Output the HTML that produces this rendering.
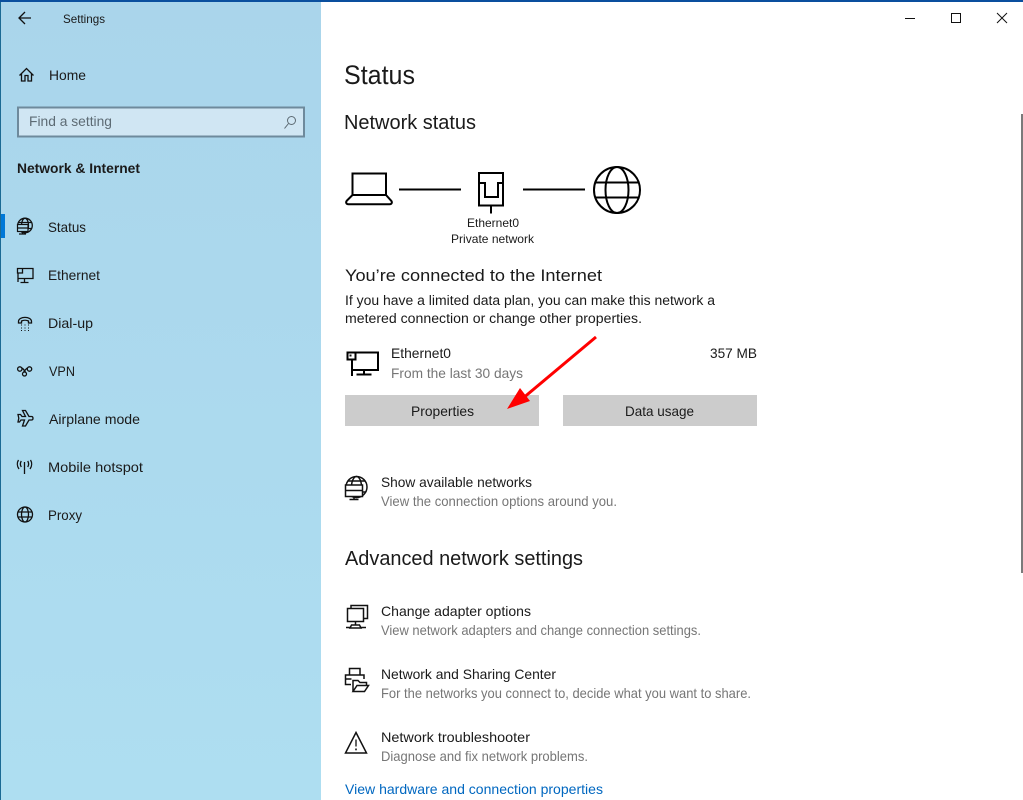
<!DOCTYPE html>
<html lang="en">
<head>
<meta charset="utf-8">
<title>Settings</title>
<style>
html,body{margin:0;padding:0;background:#fff;width:1023px;height:800px;overflow:hidden}
svg{display:block}
text{font-family:"Liberation Sans",sans-serif;fill:#1a1a1a;font-size:14px}
.g{fill:#767676}
.i{fill:none;stroke:#111;stroke-width:1.3}
.b{fill:none;stroke:#000;stroke-width:2}
</style>
</head>
<body>
<svg width="1023" height="800" viewBox="0 0 1023 800" xmlns="http://www.w3.org/2000/svg">
<defs>
<linearGradient id="sb" x1="0" y1="0" x2="0" y2="1">
<stop offset="0" stop-color="#aad5eb"/><stop offset=".35" stop-color="#abd8ed"/><stop offset="1" stop-color="#aedef1"/>
</linearGradient>
</defs>
<rect width="1023" height="800" fill="#fff"/>
<rect x="0" y="0" width="321" height="800" fill="url(#sb)"/>
<rect x="0" y="0" width="1" height="800" fill="#1b6a94"/>
<rect x="0" y="0" width="1023" height="2" fill="#0a4f9e"/>
<rect x="1021" y="114" width="2" height="459" fill="#7a7a7a"/>

<!-- title bar -->
<path class="i" d="M31 18H19.500M25 12l-6 6 6 6"/>
<text x="63" y="23" style="font-size:12px" textLength="42" lengthAdjust="spacingAndGlyphs">Settings</text>
<path d="M905 18.500h10" stroke="#111" stroke-width="1"/>
<rect x="951.500" y="13.500" width="9" height="9" fill="none" stroke="#111" stroke-width="1"/>
<path d="M997 13l10 10M1007 13l-10 10" stroke="#111" stroke-width="1" fill="none"/>

<!-- sidebar -->
<path class="i" d="M19.500 75.500l7-7 7 7M21.500 73.500v7.500h3.500V75.500h3v5.500h3.500V73.500"/>
<text x="49" y="80" textLength="37" lengthAdjust="spacingAndGlyphs">Home</text>
<rect x="18" y="107.500" width="286" height="29" fill="#d0e6f3" stroke="#6e8a9c" stroke-width="2"/>
<text class="g" x="29" y="126" style="fill:#5d6b74" textLength="83" lengthAdjust="spacingAndGlyphs">Find a setting</text>
<circle cx="291.500" cy="120.500" r="4" fill="none" stroke="#5d6b74" stroke-width="1"/>
<path d="M288.500 123.500l-4 5" stroke="#5d6b74" stroke-width="1"/>
<text x="17" y="173" style="font-weight:bold;font-size:13.500px" textLength="123" lengthAdjust="spacingAndGlyphs">Network &amp; Internet</text>

<rect x="1" y="214" width="4" height="24" fill="#0078d7"/>
<!-- status -->
<circle class="i" cx="25" cy="225.500" r="7.300"/>
<ellipse class="i" cx="25" cy="225.500" rx="3.500" ry="7.300"/>
<path class="i" d="M18.500 222.500h13M28 228.500h4"/>
<rect x="17.500" y="224.500" width="10.500" height="7" fill="#abd8ed" stroke="#111" stroke-width="1.200"/>
<path class="i" d="M17.500 228h10.500M22.500 231.500v2.500M19 234h7"/>
<text x="48" y="232" textLength="38" lengthAdjust="spacingAndGlyphs">Status</text>
<!-- ethernet -->
<path class="i" d="M22.500 268.500h10.500v10h-15M17.500 268.500h5v4.500h-5zM18 273v9M24.500 278.500v3.500M20.500 282.500h8"/>
<text x="48" y="280" textLength="52" lengthAdjust="spacingAndGlyphs">Ethernet</text>
<!-- dial-up -->
<path class="i" d="M18.500 321.500c0-5.500 13-5.500 13 0v1.500h-3v-2c-2-1-5-1-7 0v2h-3z"/>
<path d="M21 325h1M24.500 325h1M28 325h1M21 328h1M24.500 328h1M28 328h1M21 330.500h1M24.500 330.500h1M28 330.500h1" stroke="#111" stroke-width="1"/>
<text x="48" y="328" textLength="45" lengthAdjust="spacingAndGlyphs">Dial-up</text>
<!-- vpn -->
<circle class="i" cx="19.800" cy="369" r="2.200"/>
<circle class="i" cx="29.500" cy="369" r="2.200"/>
<circle class="i" cx="24.500" cy="374" r="2"/>
<path class="i" d="M21.800 368c1.500 .5 2.500 2.500 3.800 4.300M27.500 368c-1.500 .5-2.500 2.500-4 4.300"/>
<text x="49" y="376" textLength="26" lengthAdjust="spacingAndGlyphs">VPN</text>
<!-- airplane -->
<path class="i" d="M22.500 410.500h3l3.500 6h2.500c2 0 2 3.500 0 3.500H29l-3.500 6h-3l2-6h-3.500l-1.500 2H18l.8-3.800-.8-3.700h2.500l1.500 2h3.500z"/>
<text x="49" y="424" textLength="91" lengthAdjust="spacingAndGlyphs">Airplane mode</text>
<!-- hotspot -->
<path class="i" d="M24.500 462v12M21.300 461c-1.200 1.800-1.200 4 0 6M27.700 461c1.200 1.800 1.200 4 0 6M18.500 460c-1.600 2.500-1.600 6 .5 9M30.500 460c1.600 2.500 1.600 6-.5 9"/>
<text x="48" y="472" textLength="95" lengthAdjust="spacingAndGlyphs">Mobile hotspot</text>
<!-- proxy -->
<circle class="i" cx="25" cy="514.500" r="7.500"/>
<ellipse class="i" cx="25" cy="514.500" rx="3.500" ry="7.500"/>
<path class="i" d="M18 512h14M18 517h14"/>
<text x="48" y="520" textLength="34" lengthAdjust="spacingAndGlyphs">Proxy</text>

<!-- main headers -->
<text x="344" y="84" style="font-size:27px" textLength="71" lengthAdjust="spacingAndGlyphs">Status</text>
<text x="344" y="129" style="font-size:20px" textLength="132" lengthAdjust="spacingAndGlyphs">Network status</text>

<!-- network diagram -->
<path class="b" d="M352.500 195v-21.500h33.500V195M352.500 195l-5.500 5.500c-1.500 1.500-1 3.800 1.500 3.800h41c2.500 0 3-2.300 1.500-3.800L386 195zM352.500 195h33.500"/>
<path class="b" d="M399 189.500h62M523 189.500h62"/>
<path class="b" d="M479 173h24v32.500h-24zM479 183h6v14h13v-14h5"/>
<path class="b" d="M491 205.500v8"/>
<circle class="b" cx="617" cy="190" r="23"/>
<ellipse class="b" cx="617" cy="190" rx="11.500" ry="23"/>
<path class="b" d="M596 182.500h42M596 197.500h42"/>
<text x="467" y="227" style="font-size:12px" textLength="52" lengthAdjust="spacingAndGlyphs">Ethernet0</text>
<text x="451" y="243" style="font-size:12px" textLength="83" lengthAdjust="spacingAndGlyphs">Private network</text>

<text x="345" y="281" style="font-size:17px" textLength="257" lengthAdjust="spacingAndGlyphs">You’re connected to the Internet</text>
<text x="345" y="305" style="font-size:13.500px" textLength="370" lengthAdjust="spacingAndGlyphs">If you have a limited data plan, you can make this network a</text>
<text x="345" y="323" style="font-size:13.500px" textLength="297" lengthAdjust="spacingAndGlyphs">metered connection or change other properties.</text>

<!-- ethernet row -->
<path class="b" d="M355 352.500h23v17.500h-26M347.500 352.500h8v7h-8zM352 359.500V376M364 370v4.500M356.500 374.500h15"/>
<rect x="349.500" y="354.500" width="2" height="2" fill="#111"/>
<text x="391" y="358" textLength="60" lengthAdjust="spacingAndGlyphs">Ethernet0</text>
<text x="710" y="358" textLength="47" lengthAdjust="spacingAndGlyphs">357 MB</text>
<text class="g" x="391" y="378" textLength="132" lengthAdjust="spacingAndGlyphs">From the last 30 days</text>

<rect x="345" y="395" width="194" height="31" fill="#cccccc"/>
<rect x="563" y="395" width="194" height="31" fill="#cccccc"/>
<text x="411" y="416" textLength="63" lengthAdjust="spacingAndGlyphs">Properties</text>
<text x="625" y="416" textLength="69" lengthAdjust="spacingAndGlyphs">Data usage</text>

<!-- arrow -->
<path d="M596 337L522 399" stroke="#f00" stroke-width="3" fill="none"/>
<path d="M507 409L520 388L530 401z" fill="#f00"/>

<!-- show networks -->
<g class="i" style="stroke-width:1.500">
<circle cx="356.500" cy="487" r="10.500"/>
<ellipse cx="356.500" cy="487" rx="5" ry="10.500"/>
<path d="M347.500 481h18M347.500 492h18"/>
<rect x="345.500" y="485" width="17" height="11.500" fill="#fff"/>
<path d="M345.500 490.500h17M354 496.500v3M349.500 499.500h9"/>
</g>
<text x="381" y="487" textLength="151" lengthAdjust="spacingAndGlyphs">Show available networks</text>
<text class="g" x="381" y="506" textLength="236" lengthAdjust="spacingAndGlyphs">View the connection options around you.</text>

<text x="345" y="565" style="font-size:20px" textLength="238" lengthAdjust="spacingAndGlyphs">Advanced network settings</text>

<!-- adapter -->
<g class="i" style="stroke-width:1.500">
<path d="M351 608v-2.500h16.500v13H364"/>
<rect x="347.500" y="608.500" width="16" height="13"/>
<path d="M355.500 621.500v3.500M351.500 625h8l1.500 3h-11zM346 627.500h4M361 627.500h5"/>
</g>
<text x="381" y="616" textLength="150" lengthAdjust="spacingAndGlyphs">Change adapter options</text>
<text class="g" x="381" y="635" textLength="320" lengthAdjust="spacingAndGlyphs">View network adapters and change connection settings.</text>

<!-- sharing -->
<g class="i" style="stroke-width:1.500">
<path d="M349.500 675v-6.500h10.500V675M351 684.500h-5.500v-9.500h18.500v4M345.500 679h6"/>
<path d="M353 691.500v-11h5l2 2h6.500v3.500M353 691.500h11.500l4-6h-11.500z" fill="#fff"/>
</g>
<text x="381" y="679" textLength="175" lengthAdjust="spacingAndGlyphs">Network and Sharing Center</text>
<text class="g" x="381" y="698" textLength="370" lengthAdjust="spacingAndGlyphs">For the networks you connect to, decide what you want to share.</text>

<!-- trouble -->
<path class="i" style="stroke-width:1.500" d="M356 732.500l10.500 20.500h-21z"/>
<path d="M356 739.500v7" stroke="#111" stroke-width="1.300"/>
<rect x="355.200" y="748.500" width="1.600" height="1.800" fill="#111"/>
<text x="381" y="742" textLength="149" lengthAdjust="spacingAndGlyphs">Network troubleshooter</text>
<text class="g" x="381" y="761" textLength="207" lengthAdjust="spacingAndGlyphs">Diagnose and fix network problems.</text>

<text x="345" y="794" style="fill:#0067c0" textLength="258" lengthAdjust="spacingAndGlyphs">View hardware and connection properties</text>
</svg>
</body>
</html>
